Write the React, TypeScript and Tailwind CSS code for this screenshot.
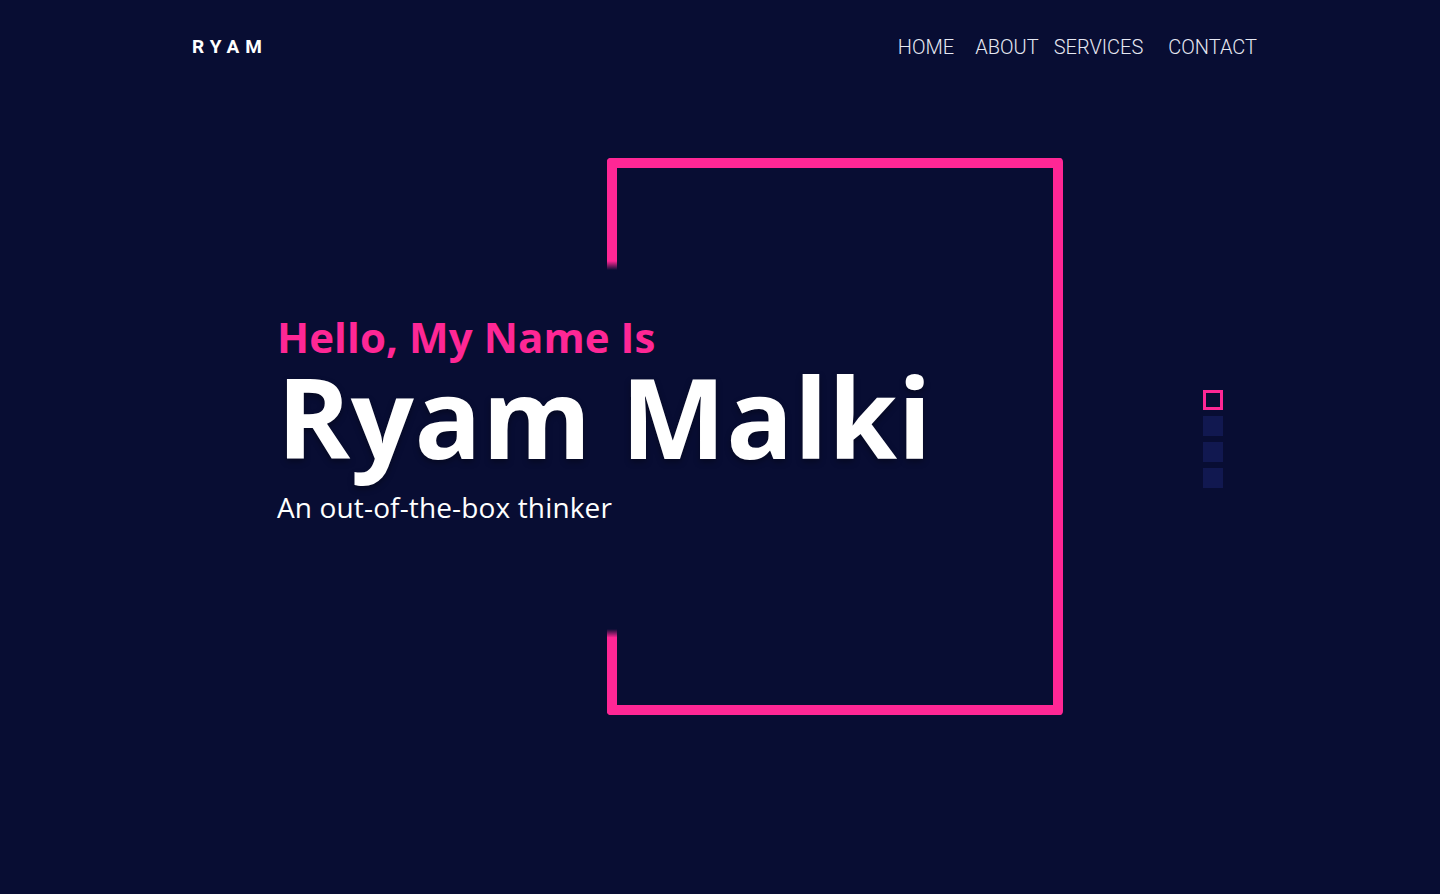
import React from "react";

export default function App() {
  return (
    <div className="w-full h-[894px] bg-[#080d33] overflow-hidden relative" style={{ fontFamily: "'Open Sans', sans-serif" }}>
      <header className="flex items-center justify-between pl-[192px] pr-[183px] h-[94px]">
        <div className="text-white text-[19px] font-bold tracking-[0.32em] font-['Roboto',sans-serif]">RYAM</div>
        <nav className="flex items-center text-[20px] font-light text-[#e6e8f2] font-['Roboto',sans-serif]">
          <a className="mr-[21px]">HOME</a>
          <a className="mr-[15px]">ABOUT</a>
          <a className="mr-[25px]">SERVICES</a>
          <a>CONTACT</a>
        </nav>
      </header>

      <section className="relative h-[800px]">
        {/* frame */}
        <div className="absolute left-[607px] top-[64px] w-[456px] h-[557px]">
          <div className="absolute inset-0 border-t-[10px] border-r-[10px] border-b-[10px] border-[#fe2795] rounded-[4px]" />
          <div className="absolute left-0 top-0 w-[10px] h-[112px] rounded-tl-[4px] bg-gradient-to-b from-[#fe2795] from-[92%] to-transparent" />
          <div className="absolute left-0 bottom-0 w-[10px] h-[86px] rounded-bl-[4px] bg-gradient-to-t from-[#fe2795] from-[90%] to-transparent" />
        </div>

        {/* text */}
        <div className="relative pl-[277px] pt-[219px]">
          <div className="text-[#fe2795] font-bold text-[42px] leading-[48px] tracking-[0.002em]">Hello, My Name Is</div>
          <div className="text-white font-bold text-[111px] leading-[110px] tracking-[0.005em] [text-shadow:0_3px_6px_rgba(0,0,0,0.35)]">Ryam Malki</div>
          <div className="text-white text-[28px] leading-[36px] mt-[18px] tracking-[0.005em]">An out-of-the-box thinker</div>
        </div>

        {/* pagination */}
        <div className="absolute left-[1203px] top-[296px] flex flex-col gap-[6px]">
          <div className="w-[20px] h-[20px] border-[3px] border-[#fe2795]" />
          <div className="w-[20px] h-[20px] bg-[#111850]" />
          <div className="w-[20px] h-[20px] bg-[#111850]" />
          <div className="w-[20px] h-[20px] bg-[#111850]" />
        </div>
      </section>
    </div>
  );
}
